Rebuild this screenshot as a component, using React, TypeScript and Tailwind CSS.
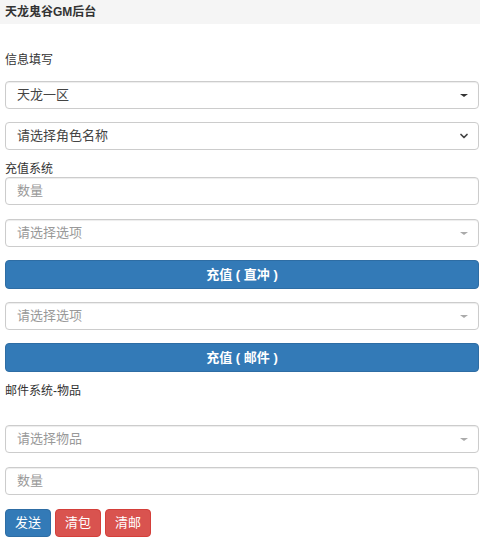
import { ChevronDown } from "lucide-react";

const font = { fontFamily: '"Liberation Sans", "Noto Sans CJK SC", sans-serif' };

function Caret({ light }: { light?: boolean }) {
  return (
    <span
      className={`h-0 w-0 border-x-[4px] border-t-[3px] border-x-transparent ${
        light ? "border-t-[#aaa]" : "border-t-[#333]"
      }`}
    />
  );
}

function FakeSelect({ text, placeholder }: { text: string; placeholder?: boolean }) {
  return (
    <div className="flex h-[28px] items-center justify-between rounded-[4px] border border-[#ccc] bg-white pl-[11px] pr-[10px] shadow-[inset_0_1px_1px_rgba(0,0,0,0.075)]">
      <span className={`text-[13px] ${placeholder ? "text-[#999]" : "text-[#444]"}`}>{text}</span>
      <Caret light={placeholder} />
    </div>
  );
}

function Field({ placeholder }: { placeholder: string }) {
  return (
    <div className="flex h-[28px] items-center rounded-[4px] border border-[#ccc] bg-white pl-[11px] shadow-[inset_0_1px_1px_rgba(0,0,0,0.075)]">
      <span className="text-[13px] text-[#999]">{placeholder}</span>
    </div>
  );
}

export default function App() {
  return (
    <div className="min-h-screen bg-white text-[#333]" style={font}>
      <div className="flex h-[24px] items-center bg-[#f5f5f5] pl-[5px]">
        <span className="text-[12px] font-bold text-[#333]">天龙鬼谷GM后台</span>
      </div>

      <div className="flex flex-col pl-[5px] pr-[1px]">
        <div className="mt-[27px] text-[12px] leading-[18px]">信息填写</div>

        <div className="mt-[12px]">
          <FakeSelect text="天龙一区" />
        </div>

        <div className="mt-[13px] flex h-[28px] items-center justify-between rounded-[4px] border border-[#ccc] bg-white pl-[11px] pr-[8px]">
          <span className="text-[13px] text-[#444]">请选择角色名称</span>
          <ChevronDown size={12} strokeWidth={3.5} className="text-[#444]" />
        </div>

        <div className="mt-[12px] text-[12px] leading-[14px]">充值系统</div>

        <div className="mt-[1px]">
          <Field placeholder="数量" />
        </div>

        <div className="mt-[14px]">
          <FakeSelect text="请选择选项" placeholder />
        </div>

        <button className="mt-[13px] flex h-[29px] items-center justify-center rounded-[4px] border border-[#2e6da4] bg-[#337ab7] text-[13px] font-bold text-white">
          充值 ( 直冲 )
        </button>

        <div className="mt-[13px]">
          <FakeSelect text="请选择选项" placeholder />
        </div>

        <button className="mt-[13px] flex h-[29px] items-center justify-center rounded-[4px] border border-[#2e6da4] bg-[#337ab7] text-[13px] font-bold text-white">
          充值 ( 邮件 )
        </button>

        <div className="mt-[10px] text-[12px] leading-[18px]">邮件系统-物品</div>

        <div className="mt-[25px]">
          <FakeSelect text="请选择物品" placeholder />
        </div>

        <div className="mt-[14px]">
          <Field placeholder="数量" />
        </div>

        <div className="mt-[14px] flex gap-[4px]">
          <button className="flex h-[28px] w-[46px] items-center justify-center rounded-[4px] border border-[#2e6da4] bg-[#337ab7] text-[13px] text-white">
            发送
          </button>
          <button className="flex h-[28px] w-[46px] items-center justify-center rounded-[4px] border border-[#d43f3a] bg-[#d9534f] text-[13px] text-white">
            清包
          </button>
          <button className="flex h-[28px] w-[46px] items-center justify-center rounded-[4px] border border-[#d43f3a] bg-[#d9534f] text-[13px] text-white">
            清邮
          </button>
        </div>
      </div>
    </div>
  );
}
